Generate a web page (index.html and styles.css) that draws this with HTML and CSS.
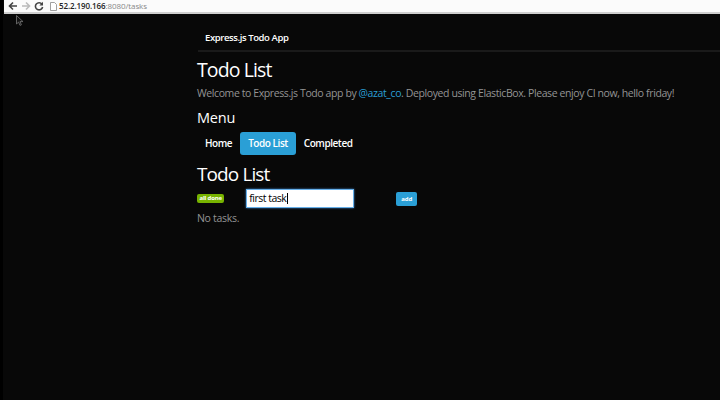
FILE: index.html
```html
<!DOCTYPE html>
<html>
<head>
<meta charset="utf-8">
<link rel="stylesheet" href="styles.css">
</head>
<body>
<div class="chrome">
  <div class="chrome-nav">
    <svg class="ic" width="10" height="10" viewBox="0 0 10 10"><path d="M9 5H2M5 1.5L1.5 5 5 8.5" stroke="#444" stroke-width="1.6" fill="none"/></svg>
    <svg class="ic" width="10" height="10" viewBox="0 0 10 10"><path d="M1 5h7M5 1.5L8.5 5 5 8.5" stroke="#bbb" stroke-width="1.6" fill="none"/></svg>
    <svg class="ic" width="10" height="10" viewBox="0 0 10 10"><path d="M8 3.2A3.6 3.6 0 1 0 8.6 6" stroke="#444" stroke-width="1.6" fill="none"/><path d="M9 0.8V4.4H5.4z" fill="#444"/></svg>
  </div>
  <div class="url">
    <svg class="doc" width="7" height="9" viewBox="0 0 7 9"><path d="M0.5 0.5h4l2 2v6h-6z" fill="#fff" stroke="#888" stroke-width="0.8"/></svg>
    <span class="host">52.2.190.166</span><span class="path">:8080/tasks</span>
  </div>
</div>
<svg class="cursor" width="8" height="11" viewBox="0 0 8 11"><path d="M0.5 0.5V9L2.6 7.1 4 10.4 5.4 9.8 4 6.6H7z" fill="#111" stroke="#777" stroke-width="0.8"/></svg>
<div class="page">
  <div class="navbar"><span class="brand">Express.js Todo App</span></div>
  <div class="content">
    <h1 class="title">Todo List</h1>
    <p class="lead">Welcome to Express.js Todo app by <a class="link" href="#">@azat_co</a>. Deployed using ElasticBox. Please enjoy CI now, hello friday!</p>
    <h2 class="menu-title">Menu</h2>
    <ul class="pills">
      <li class="pill">Home</li>
      <li class="pill active">Todo List</li>
      <li class="pill">Completed</li>
    </ul>
    <h2 class="section-title">Todo List</h2>
    <div class="form-row">
      <span class="label-done">all done</span>
      <span class="input">first task<span class="caret"></span></span>
      <span class="btn-add">add</span>
    </div>
    <p class="empty">No tasks.</p>
  </div>
</div>
</body>
</html>
```
FILE: styles.css
```css
html, body {
  margin: 0;
  padding: 0;
  background: #080808;
  height: 100%;
  overflow: hidden;
}
body {
  font-family: "Open Sans", "DejaVu Sans", sans-serif;
  color: #fff;
  border-left: 3px solid #000;
  box-sizing: border-box;
  position: relative;
}
.chrome {
  height: 12px;
  background: #fbfbfb;
  border-bottom: 2px solid #cfcfcf;
  display: flex;
  align-items: center;
  margin-left: 1px;
}
.chrome-nav {
  display: flex;
  gap: 3px;
  padding-left: 4px;
}
.ic { display: block; }
.url {
  display: flex;
  align-items: center;
  margin-left: 6px;
  height: 12px;
  font-family: "Open Sans", sans-serif;
  font-size: 8px;
  font-weight: 600;
  line-height: 12px;
  letter-spacing: -0.1px;
}
.doc { margin-right: 2px; }
.host { color: #222; }
.path { color: #888; font-weight: 400; }
.cursor {
  position: absolute;
  left: 13px;
  top: 15px;
}
.page {
  padding-left: 194px;
}
.navbar {
  border-bottom: 2px solid #1a1a1a;
  display: flex;
  align-items: flex-end;
  padding: 0 0 5px 7px;
  box-sizing: border-box;
  height: 38px;
  margin-left: 1px;
}
.brand {
  font-size: 9.5px;
  font-weight: 600;
  color: #fff;
  letter-spacing: -0.4px;
  line-height: 14px;
}
.title {
  margin: 6px 0 0;
  font-size: 19.5px;
  font-weight: 500;
  line-height: 24px;
  letter-spacing: -0.9px;
}
.lead {
  margin: 3px 0 0;
  font-size: 10.5px;
  line-height: 16px;
  color: #949494;
  letter-spacing: -0.4px;
}
.link { color: #2a9fd6; text-decoration: none; }
.menu-title {
  margin: 7px 0 0;
  font-size: 14.5px;
  font-weight: 500;
  line-height: 20px;
  letter-spacing: -0.2px;
}
.pills {
  list-style: none;
  display: flex;
  margin: 4px 0 0;
  padding: 0;
}
.pill {
  font-size: 10px;
  font-weight: 600;
  padding: 0 8px;
  height: 23px;
  line-height: 23px;
  border-radius: 3px;
  color: #fff;
  letter-spacing: -0.45px;
}
.pill.active { background: #2a9fd6; }
.section-title {
  margin: 7px 0 0;
  font-size: 19px;
  font-weight: 500;
  line-height: 24px;
  letter-spacing: -0.9px;
}
.form-row {
  display: flex;
  align-items: center;
  margin-top: 3px;
  height: 19px;
}
.label-done {
  background: #77b300;
  color: #fff;
  font-size: 6px;
  font-weight: 700;
  height: 9px;
  line-height: 9px;
  padding: 0 2.5px;
  border-radius: 2px;
  letter-spacing: -0.2px;
}
.input {
  margin-left: 22px;
  width: 104px;
  height: 17px;
  border: 1px solid #66afe9;
  box-shadow: 0 0 2px #3d80c4;
  background: #fff;
  color: #000;
  font-size: 10.5px;
  line-height: 17px;
  padding-left: 2px;
  display: flex;
  align-items: center;
  letter-spacing: -0.5px;
}
.caret {
  display: inline-block;
  width: 1px;
  height: 11px;
  background: #000;
  margin-left: 1px;
}
.btn-add {
  margin-left: 42px;
  width: 21px;
  height: 14px;
  background: #2a9fd6;
  border-radius: 2px;
  font-size: 6px;
  font-weight: 700;
  line-height: 14px;
  text-align: center;
  color: #fff;
}
.empty {
  margin: 2px 0 0;
  font-size: 10.5px;
  line-height: 16px;
  color: #949494;
  letter-spacing: -0.3px;
}
```
